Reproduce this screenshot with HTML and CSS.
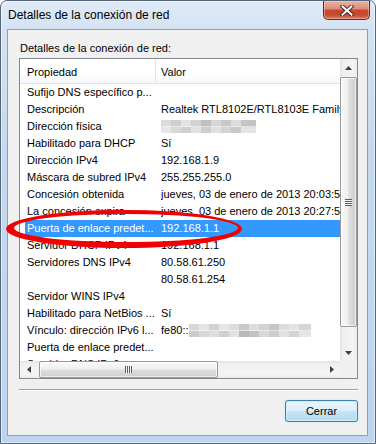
FILE: index.html
```html
<!DOCTYPE html>
<html lang="es">
<head>
<meta charset="utf-8">
<title>Detalles de la conexión de red</title>
<link rel="stylesheet" href="styles.css">
</head>
<body>
<div class="window">
  <div class="titlebar">
    <span class="title">Detalles de la conexión de red</span>
    <div class="close">
      <svg width="14" height="11" viewBox="0 0 14 11"><path d="M2.5 1.5 L11.5 9.5 M11.5 1.5 L2.5 9.5" stroke="#4a2a28" stroke-width="4" stroke-linecap="square"/><path d="M2.5 1.5 L11.5 9.5 M11.5 1.5 L2.5 9.5" stroke="#ffffff" stroke-width="2" stroke-linecap="square"/></svg>
    </div>
  </div>
  <div class="client">
    <div class="label">Detalles de la conexión de red:</div>
    <div class="listbox">
      <div class="content">
        <div class="header">
          <div class="hcol hprop">Propiedad</div>
          <div class="hcol hval">Valor</div>
        </div>
        <div class="row"><div class="prop">Sufijo DNS específico p...</div><div class="val"></div></div>
        <div class="row"><div class="prop">Descripción</div><div class="val">Realtek RTL8102E/RTL8103E Family PCI-E Fast Ethernet NIC (NDIS 6.20)</div></div>
        <div class="row"><div class="prop">Dirección física</div><div class="val has-blur"><span class="blur blur-mac"></span></div></div>
        <div class="row"><div class="prop">Habilitado para DHCP</div><div class="val">Sí</div></div>
        <div class="row"><div class="prop">Dirección IPv4</div><div class="val">192.168.1.9</div></div>
        <div class="row"><div class="prop">Máscara de subred IPv4</div><div class="val">255.255.255.0</div></div>
        <div class="row"><div class="prop">Concesión obtenida</div><div class="val">jueves, 03 de enero de 2013 20:03:55</div></div>
        <div class="row"><div class="prop">La concesión expira</div><div class="val">jueves, 03 de enero de 2013 20:27:57</div></div>
        <div class="row sel"><div class="prop">Puerta de enlace predet...</div><div class="val">192.168.1.1</div></div>
        <div class="row"><div class="prop">Servidor DHCP IPv4</div><div class="val">192.168.1.1</div></div>
        <div class="row"><div class="prop">Servidores DNS IPv4</div><div class="val">80.58.61.250</div></div>
        <div class="row"><div class="prop"></div><div class="val">80.58.61.254</div></div>
        <div class="row"><div class="prop">Servidor WINS IPv4</div><div class="val"></div></div>
        <div class="row"><div class="prop">Habilitado para NetBios ...</div><div class="val">Sí</div></div>
        <div class="row"><div class="prop">Vínculo: dirección IPv6 l...</div><div class="val has-blur">fe80::<span class="blur blur-ipv6"></span></div></div>
        <div class="row"><div class="prop">Puerta de enlace predet...</div><div class="val"></div></div>
        <div class="row"><div class="prop">Servidor DNS IPv6</div><div class="val"></div></div>
      </div>
      <div class="vscroll">
        <div class="arrow"><svg width="7" height="4" viewBox="0 0 7 4"><path d="M0 4 L3.5 0 L7 4 Z" fill="#3e3e3e"/></svg></div>
        <div class="vtrack"><div class="vthumb"><span class="vgrip"></span></div></div>
        <div class="arrow"><svg width="7" height="4" viewBox="0 0 7 4"><path d="M0 0 L7 0 L3.5 4 Z" fill="#3e3e3e"/></svg></div>
      </div>
      <div class="hscroll">
        <div class="arrow"><svg width="4" height="7" viewBox="0 0 4 7"><path d="M4 0 L4 7 L0 3.5 Z" fill="#3e3e3e"/></svg></div>
        <div class="htrack"><div class="hthumb"><span class="hgrip"></span></div></div>
        <div class="arrow"><svg width="4" height="7" viewBox="0 0 4 7"><path d="M0 0 L4 3.5 L0 7 Z" fill="#3e3e3e"/></svg></div>
      </div>
      <div class="corner"></div>
    </div>
    <div class="sep"></div>
    <div class="actions"><button class="btn">Cerrar</button></div>
  </div>
  <svg class="ring" width="376" height="444" viewBox="0 0 376 444">
    <path fill-rule="evenodd" fill="#f00000" d="M6 229 a118 19 0 1 0 236 0 a118 19 0 1 0 -236 0 Z M14 228 a112 14 0 1 0 224 0 a112 14 0 1 0 -224 0 Z"/>
  </svg>
</div>
</body>
</html>
```
FILE: styles.css
```css
* { box-sizing: border-box; }
html, body { margin: 0; padding: 0; }
body {
  width: 376px;
  height: 444px;
  overflow: hidden;
  background: #ffffff;
  font-family: "Liberation Sans", Arial, sans-serif;
  font-size: 11px;
  color: #000;
}
.window {
  position: relative;
  width: 376px;
  height: 444px;
  border: 1px solid #56667a;
  border-radius: 7px 7px 0 0;
  padding: 0 7px 7px 6px;
  background: linear-gradient(180deg, #dfeaf6 0px, #d4e3f3 28px, #c5daef 140px, #bcd4ee 444px);
  box-shadow: inset 0 0 0 1px rgba(255,255,255,0.55);
  display: flex;
  flex-direction: column;
}
.titlebar {
  height: 28px;
  display: flex;
  justify-content: space-between;
  align-items: flex-start;
}
.title {
  font-size: 12px;
  line-height: 14px;
  padding: 7px 0 0 1px;
  color: #000;
}
.close {
  width: 47px;
  height: 19px;
  margin-right: -2px;
  border: 1px solid #6b2a20;
  border-top: none;
  border-radius: 0 0 5px 5px;
  background: linear-gradient(180deg, #eab1a2 0%, #de8f7b 42%, #c9472d 52%, #c44a30 75%, #d9775d 100%);
  box-shadow: inset 0 0 0 1px rgba(255,215,205,0.45);
  display: flex;
  align-items: center;
  justify-content: center;
}
.close svg { display: block; }
.client {
  flex: 1;
  background: #f0f0f0;
  border: 1px solid #8ca1b9;
  padding: 12px 10px 0 11px;
  display: flex;
  flex-direction: column;
}
.label {
  line-height: 12px;
  margin: 0 0 4px 1px;
}
.listbox {
  width: 339px;
  height: 321px;
  border: 1px solid #828790;
  background: #fff;
  display: grid;
  grid-template-columns: 320px 17px;
  grid-template-rows: 302px 17px;
}
.content { overflow: hidden; }
.header {
  height: 25px;
  display: flex;
  border-bottom: 1px solid #e2e2e2;
  background: linear-gradient(180deg, #ffffff 0%, #ffffff 55%, #f6f7f9 100%);
}
.hcol {
  line-height: 22px;
  padding-top: 2px;
}
.hprop {
  width: 136px;
  padding-left: 7px;
  border-right: 1px solid #e3e3e3;
}
.hval { padding-left: 5px; }
.row {
  height: 17px;
  margin-left: 5px;
  display: grid;
  grid-template-columns: 136px 1fr;
  line-height: 17px;
  white-space: nowrap;
}
.prop { padding-left: 2px; overflow: hidden; }
.val { overflow: hidden; }
.has-blur { display: flex; align-items: center; }
.row.sel { background: #3399ff; color: #fff; }
.blur { display: inline-block; height: 13px; flex: none; }
.blur-mac {
  width: 95px;
  background:
    linear-gradient(90deg, #dcdcdc 0 10px, #cfcfcf 10px 20px, #e3e3e3 20px 30px, #d2d2d2 30px 40px, #c0c0c0 40px 50px, #d6d6d6 50px 60px, #c8c8c8 60px 70px, #dddddd 70px 80px, #c4c4c4 80px 95px) top / 100% 50% no-repeat,
    linear-gradient(90deg, #e6e6e6 0 10px, #d9d9d9 10px 20px, #d0d0d0 20px 30px, #e2e2e2 30px 40px, #cdcdcd 40px 50px, #e0e0e0 50px 60px, #d4d4d4 60px 70px, #c9c9c9 70px 80px, #e4e4e4 80px 95px) bottom / 100% 50% no-repeat;
}
.blur-ipv6 {
  width: 122px;
  background:
    linear-gradient(90deg, #d8d8d8 0 10px, #e4e4e4 10px 20px, #d2d2d2 20px 30px, #e6e6e6 30px 40px, #dcdcdc 40px 50px, #c9c9c9 50px 60px, #dedede 60px 70px, #d3d3d3 70px 80px, #c6c6c6 80px 90px, #dcdcdc 90px 100px, #e3e3e3 100px 110px, #d6d6d6 110px 122px) top / 100% 50% no-repeat,
    linear-gradient(90deg, #cccccc 0 10px, #d8d8d8 10px 20px, #dfdfdf 20px 30px, #d0d0d0 30px 40px, #e2e2e2 40px 50px, #b9b9b9 50px 60px, #c3c3c3 60px 70px, #d9d9d9 70px 80px, #cdcdcd 80px 90px, #e1e1e1 90px 100px, #d4d4d4 100px 110px, #e5e5e5 110px 122px) bottom / 100% 50% no-repeat;
}
.vscroll {
  display: grid;
  grid-template-rows: 17px 1fr 17px;
  background: linear-gradient(90deg, #e2e2e2 0px, #efefef 3px, #f4f4f4 13px, #ebebeb 17px);
}
.arrow {
  display: flex;
  align-items: center;
  justify-content: center;
}
.arrow svg { display: block; }
.vtrack { padding-top: 1px; }
.vthumb {
  height: 250px;
  border: 1px solid #989898;
  border-radius: 2px;
  background: linear-gradient(90deg, #fafafa 0%, #efefef 45%, #dedede 55%, #cdcdcd 100%);
  box-shadow: inset 0 0 0 1px rgba(255,255,255,0.7);
  display: flex;
  align-items: center;
  justify-content: center;
}
.vgrip {
  width: 7px;
  height: 7px;
  background: repeating-linear-gradient(180deg, #5e5e5e 0 1px, #f4f4f4 1px 2px);
}
.hscroll {
  display: grid;
  grid-template-columns: 17px 1fr 17px;
  background: linear-gradient(180deg, #e2e2e2 0px, #efefef 3px, #f4f4f4 13px, #ebebeb 17px);
}
.htrack { padding-left: 2px; }
.hthumb {
  width: 179px;
  height: 17px;
  border: 1px solid #989898;
  border-radius: 2px;
  background: linear-gradient(180deg, #fafafa 0%, #efefef 45%, #dedede 55%, #cdcdcd 100%);
  box-shadow: inset 0 0 0 1px rgba(255,255,255,0.7);
  display: flex;
  align-items: center;
  justify-content: center;
}
.hgrip {
  width: 7px;
  height: 7px;
  background: repeating-linear-gradient(90deg, #5e5e5e 0 1px, #f4f4f4 1px 2px);
}
.corner { background: #f0f0f0; }
.sep {
  width: 339px;
  height: 2px;
  margin-top: 10px;
  border-top: 1px solid #a0a0a0;
  border-bottom: 1px solid #ffffff;
}
.actions {
  width: 339px;
  margin-top: 9px;
  display: flex;
  justify-content: flex-end;
}
.btn {
  width: 73px;
  height: 22px;
  padding: 0;
  border: 1px solid #3c7fb1;
  border-radius: 3px;
  background: linear-gradient(180deg, #e9f5fc 0%, #dbeffb 48%, #c2e4f8 52%, #b4dbf3 100%);
  box-shadow: inset 0 0 0 1px #cfeefd, 0 0 1px #7fc6ee;
  font-family: "Liberation Sans", Arial, sans-serif;
  font-size: 11px;
  color: #000;
}
.ring {
  position: absolute;
  top: -1px;
  left: -1px;
  pointer-events: none;
}
```
